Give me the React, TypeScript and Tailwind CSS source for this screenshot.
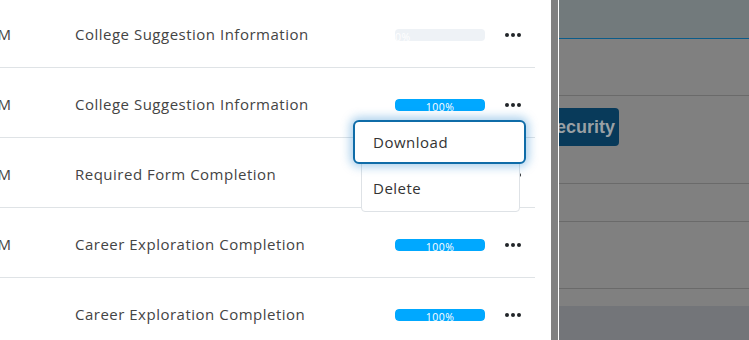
const ROWS = [
  { time: "PM", title: "College Suggestion Information", pct: 0 },
  { time: "PM", title: "College Suggestion Information", pct: 100 },
  { time: "PM", title: "Required Form Completion", pct: 100 },
  { time: "PM", title: "Career Exploration Completion", pct: 100 },
  { time: "", title: "Career Exploration Completion", pct: 100 },
];

function Dots() {
  return (
    <svg width="16" height="4" viewBox="0 0 16 4" className="text-[#212529]">
      <circle cx="2" cy="2" r="2" fill="currentColor" />
      <circle cx="8" cy="2" r="2" fill="currentColor" />
      <circle cx="14" cy="2" r="2" fill="currentColor" />
    </svg>
  );
}

function Progress({ pct }: { pct: number }) {
  return (
    <div className="relative w-[90px] h-[12px] rounded-[4px] bg-[#eef2f6] overflow-hidden">
      {pct > 0 ? (
        <div
          className="h-full bg-[#00a8ff] rounded-[4px] flex justify-center"
          style={{ width: `${pct}%` }}
        >
          <span className="text-[10.5px] leading-[12px] text-white mt-[2px]">{pct}%</span>
        </div>
      ) : (
        <span className="absolute left-0 top-[2px] text-[10.5px] leading-[12px] text-white">0%</span>
      )}
    </div>
  );
}

export default function App() {
  return (
    <div
      className="w-[749px] h-[340px] flex overflow-hidden bg-white"
      style={{ fontFamily: "'Open Sans', 'Liberation Sans', sans-serif" }}
    >
      {/* table panel */}
      <div className="relative w-[551px] shrink-0 bg-white pr-[16px]">
        <div className="-mt-[2px]">
          {ROWS.map((r, i) => (
            <div
              key={i}
              className="h-[70px] pt-[4px] flex items-center border-b border-[#dfe3e6] text-[15px] tracking-[0.5px] text-[#444]"
            >
              <div className="w-[63px] -ml-[12px] overflow-hidden whitespace-nowrap">{r.time}</div>
              <div className="w-[320px] ml-[24px] whitespace-nowrap">{r.title}</div>
              <Progress pct={r.pct} />
              <div className="ml-[20px]">
                <Dots />
              </div>
            </div>
          ))}
        </div>

        {/* dropdown menu */}
        <div className="absolute left-[361px] top-[126px] w-[159px] h-[86px] bg-white border border-[#dee2e6] rounded-[4px] text-[15px] tracking-[0.5px] text-[#333]">
          <div className="absolute left-[11px] top-[50px]">Delete</div>
        </div>
        <div className="absolute left-[353px] top-[120px] w-[173px] h-[44px] bg-white border-2 border-[#0f6ca8] rounded-[6px] shadow-[0_0_10px_3px_rgba(13,120,200,0.35)] flex items-center pl-[18px] text-[15px] tracking-[0.5px] text-[#333]">
          Download
        </div>
      </div>

      {/* dimmed page behind */}
      <div className="w-[7px] shrink-0 bg-[#808080]" />
      <div className="w-px shrink-0 bg-white" />
      <div className="flex-1 flex flex-col bg-[#808080]">
        <div className="h-[39px] shrink-0 bg-[#727a7c] border-b border-[#0b5c8a]" />
        <div className="h-[57px] shrink-0 border-b border-[#6a6a6a]" />
        <div className="h-[88px] shrink-0 border-b border-[#6a6a6a] pt-[12px]">
          <div className="w-[60px] h-[38px] bg-[#083a5a] rounded-r-[4px] overflow-hidden flex items-center justify-end pr-[4px]">
            <span
              className="text-[18px] font-bold text-[#9aa0a4] whitespace-nowrap"
              style={{ fontFamily: "'Liberation Sans', Arial, sans-serif" }}
            >
              Security
            </span>
          </div>
        </div>
        <div className="h-[38px] shrink-0 border-b border-[#6a6a6a]" />
        <div className="h-[67px] shrink-0 border-b border-[#6a6a6a]" />
        <div className="h-[17px] shrink-0" />
        <div className="flex-1 bg-[#737579]" />
      </div>
    </div>
  );
}
